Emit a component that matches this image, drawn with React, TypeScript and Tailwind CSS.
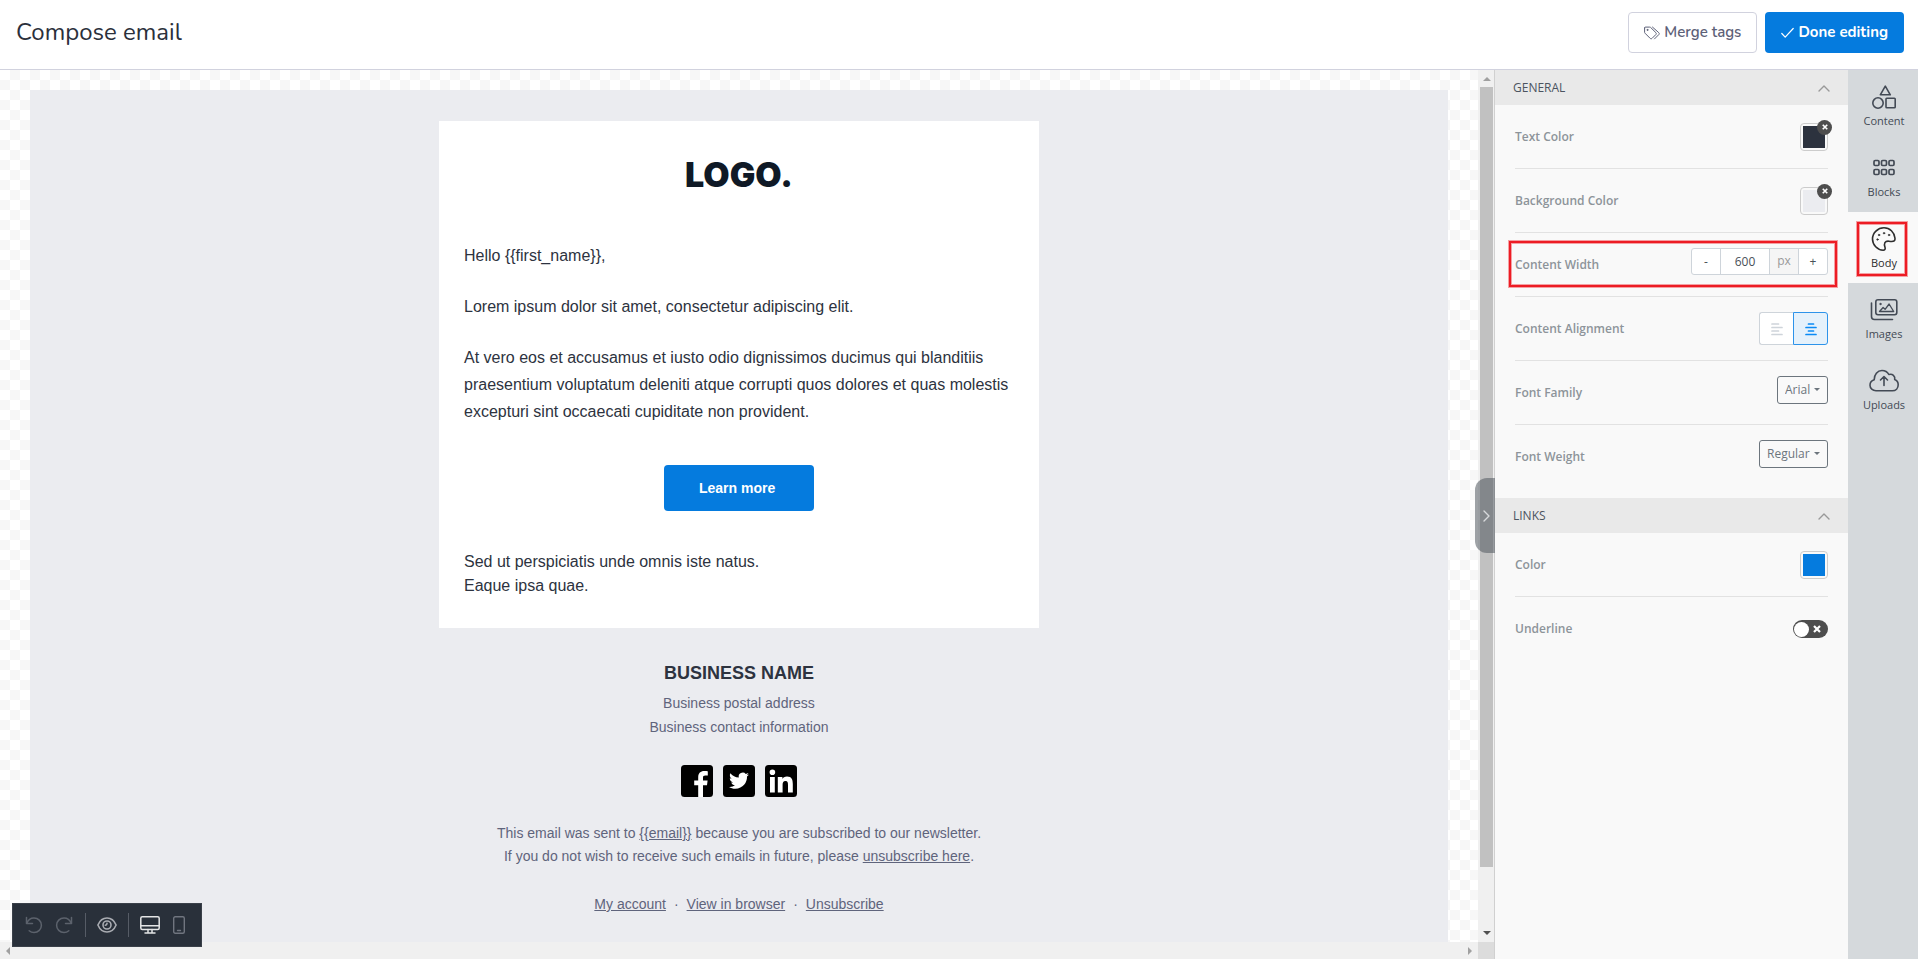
import { useState } from 'react'
import type { ReactNode } from 'react'

const TABS = [
  { label: 'Content', icon: ShapesIcon },
  { label: 'Blocks', icon: BlocksIcon },
  { label: 'Body', icon: PaletteIcon },
  { label: 'Images', icon: ImagesIcon },
  { label: 'Uploads', icon: CloudIcon },
]

const stroke = {
  fill: 'none',
  stroke: 'currentColor',
  strokeLinecap: 'round' as const,
  strokeLinejoin: 'round' as const,
}

function TagsIcon() {
  return (
    <svg width="16" height="14" viewBox="0 0 16 14" {...stroke} strokeWidth="1">
      <path d="M.6 2v4.2c0 .4.1.7.4 1l5.2 5.2c.5.5 1.3.5 1.8 0l3.9-3.9c.5-.5.5-1.3 0-1.8L6.7 1.5c-.3-.3-.6-.4-1-.4H1.500C1 1.100.6 1.500.6 2z" />
      <path d="M8.500 1.100l6.300 5.600c.6.500.6 1.300.1 1.800l-4.400 4.400" />
      <circle cx="3.400" cy="3.900" r=".5" fill="currentColor" />
    </svg>
  )
}

function CheckIcon() {
  return (
    <svg width="13" height="12" viewBox="0 0 13 12" {...stroke} strokeWidth="1.2">
      <path d="M.8 6.500l3.400 3.700L12.200 1.500" />
    </svg>
  )
}

function ShapesIcon() {
  return (
    <svg width="28" height="24" viewBox="0 0 28 24" {...stroke} strokeWidth="1.6">
      <path d="M15.300 1.200l5 8.600H10.300z" />
      <circle cx="8" cy="18" r="5.200" />
      <rect x="16" y="13.200" width="9.200" height="9.600" rx=".8" />
    </svg>
  )
}

function BlocksIcon() {
  return (
    <svg width="28" height="24" viewBox="0 0 28 24" {...stroke} strokeWidth="1.7">
      {[4, 11.5, 19].map((x) => (
        <g key={x}>
          <rect x={x} y="4.500" width="5" height="5" rx="1.200" />
          <rect x={x} y="13.500" width="5" height="5" rx="1.200" />
        </g>
      ))}
    </svg>
  )
}

function PaletteIcon() {
  return (
    <svg width="28" height="24" viewBox="0 0 28 24" {...stroke} strokeWidth="1.6">
      <path d="M14 .8C7.800.8 2.500 5.800 2.500 12c0 6 4.900 10.900 10.700 11.200 1.500 0 2.300-1.200 1.900-2.500-.7-1.800-1-3.600-.2-5 .8-1.300 2.200-1.700 4-1.500 2.100.3 4.300.5 5.300-.4.700-.6.9-1.500.8-2.600C24.400 5.300 19.800.8 14 .8z" />
      <g fill="currentColor" strokeWidth=".6">
        <circle cx="7.500" cy="12.500" r=".8" />
        <circle cx="9" cy="8" r=".8" />
        <circle cx="14" cy="6.200" r=".8" />
        <circle cx="19" cy="8" r=".8" />
      </g>
    </svg>
  )
}

function ImagesIcon() {
  return (
    <svg width="28" height="24" viewBox="0 0 28 24" {...stroke} strokeWidth="1.6">
      <rect x="5.800" y="1.800" width="21" height="15" rx="2.200" />
      <path d="M1.500 5v13.500c0 1.700 1.200 3 3 3h18" />
      <path d="M9.500 13.500l3.600-4 2 1.800 4-5.300 4.600 7.500z" strokeWidth="1.300" />
      <circle cx="10.500" cy="6" r=".9" fill="currentColor" strokeWidth=".4" />
    </svg>
  )
}

function CloudIcon() {
  return (
    <svg width="30" height="24" viewBox="0 0 30 24" {...stroke} strokeWidth="1.6">
      <path d="M7 21.800c-3.300 0-6-2.400-6-5.600 0-2.700 1.800-4.800 4.200-5.500C5.100 5.600 8.500 1.500 13 1.500c3.200 0 5.500 1.500 6.800 4 3.600-1.100 6.700 1.500 5.900 5.100 2.200.9 3.500 2.800 3.500 5.200 0 3.400-2.400 6-5.900 6z" />
      <path d="M15 16.500v-9M11.500 11L15 7.500l3.500 3.500" />
    </svg>
  )
}

function UndoIcon({ flip = false }: { flip?: boolean }) {
  return (
    <svg width="18" height="18" viewBox="0 0 18 18" className={flip ? '-scale-x-100' : ''} {...stroke} strokeWidth="1.500">
      <path d="M1.500 1.500v6h6" />
      <path d="M1.800 7.200C3 4 5.700 2 9 2c4.200 0 7.400 3.200 7.400 7.200S13.200 16.500 9 16.500c-1.900 0-3.500-.6-4.800-1.700" />
    </svg>
  )
}

function EyeIcon() {
  return (
    <svg width="20" height="18" viewBox="0 0 20 18" {...stroke} strokeWidth="1.600">
      <path d="M.9 9C2.700 4.700 6 2 10 2s7.300 2.700 9.100 7c-1.800 4.300-5.100 7-9.100 7S2.700 13.300.9 9z" />
      <circle cx="10" cy="9" r="4" />
      <path d="M8.300 9.200A1.800 1.800 0 0 0 10 7.200" />
    </svg>
  )
}

function DesktopIcon() {
  return (
    <svg width="20" height="18" viewBox="0 0 20 18" {...stroke} strokeWidth="1.500">
      <rect x=".8" y=".8" width="18.400" height="12.600" rx="1.500" />
      <path d="M1 9.800h18M8 13.500v3M12 13.500v3M5 17h10" />
    </svg>
  )
}

function PhoneIcon() {
  return (
    <svg width="12" height="18" viewBox="0 0 12 18" {...stroke} strokeWidth="1.400">
      <rect x=".7" y=".7" width="10.600" height="16.600" rx="1.500" />
      <path d="M4.500 14.500h3" />
    </svg>
  )
}

function ChevronIcon({ className = '' }: { className?: string }) {
  return (
    <svg width="12" height="12" viewBox="0 0 12 12" className={className} {...stroke} strokeWidth="1.400">
      <path d="M1 9l5-5 5 5" />
    </svg>
  )
}

function CrossIcon({ size }: { size: number }) {
  return (
    <svg width={size} height={size} viewBox="0 0 8 8" {...stroke} strokeLinecap="butt" strokeWidth="2.200">
      <path d="M1 1l6 6M7 1L1 7" />
    </svg>
  )
}

function Header() {
  return (
    <header className="flex h-[70px] shrink-0 items-start justify-between border-b border-[#d1d2de] bg-white pt-3 pr-3.5 pl-4 font-['Nunito','Lato',sans-serif]">
      <h1 className="text-2xl leading-10 font-normal text-[#2b303b]">Compose email</h1>
      <div className="flex gap-2">
        <button className="flex h-[41px] items-center gap-1 rounded-sm border border-[#d1d2de] px-[15px] text-[15px] font-semibold text-[#5d6178]">
          <TagsIcon />
          Merge tags
        </button>
        <button className="flex h-[41px] items-center gap-1 rounded-sm bg-[#057bde] px-4 text-[15px] font-bold text-white">
          <CheckIcon />
          Done editing
        </button>
      </div>
    </header>
  )
}

function SocialLink({ label, children }: { label: string; children: ReactNode }) {
  return (
    <a href="#" aria-label={label}>
      <svg width="32" height="32" viewBox="0 0 32 32">
        <rect width="32" height="32" rx="3.500" fill="#000" />
        {children}
      </svg>
    </a>
  )
}

function EmailPreview() {
  return (
    <div className="flex flex-1 flex-col items-center bg-[#ebecf0] pt-[31px] font-['Liberation_Sans',Arial,sans-serif] text-[#2d3340]">
      <div className="w-full max-w-[600px] bg-white px-[25px] pb-[30px]">
        <div className="flex h-[121px] items-center justify-center pb-[15px] font-['Inter',sans-serif] text-[34px] font-black text-[#0f1926]">
          LOGO.
        </div>
        <div className="space-y-6 leading-[27px]">
          <p>Hello {'{{first_name}}'},</p>
          <p>Lorem ipsum dolor sit amet, consectetur adipiscing elit.</p>
          <p>
            At vero eos et accusamus et iusto odio dignissimos ducimus qui blanditiis praesentium voluptatum deleniti
            atque corrupti quos dolores et quas molestis excepturi sint occaecati cupiditate non provident.
          </p>
        </div>
        <div className="flex justify-center pt-10 pb-[39px]">
          <a
            href="#"
            className="h-[46px] rounded-sm bg-[#057bde] px-[35px] text-sm leading-[46px] font-bold text-white"
          >
            Learn more&nbsp;
          </a>
        </div>
        <p>
          Sed ut perspiciatis unde omnis iste natus.
          <br />
          Eaque ipsa quae.
        </p>
      </div>

      {/* Footer */}
      <div className="flex flex-col items-center pt-[31px] text-center text-sm leading-[23px] text-[#5f647c]">
        <h2 className="text-lg leading-7 font-bold text-[#2d3340]">BUSINESS NAME</h2>
        <p className="pt-1 leading-6">
          Business postal address
          <br />
          Business contact information
        </p>
        <div className="flex gap-2.5 pt-[26px] pb-[25px]">
          <SocialLink label="Facebook">
            <path fill="#fff" d="M17.200 32V20.200h-4V15.600h4v-3.400c0-4 2.400-6.200 6-6.200 1.700 0 3.200.1 3.600.2v4.200h-2.500c-1.900 0-2.300.9-2.300 2.300v2.900h4.600l-.6 4.600h-4V32z" />
          </SocialLink>
          <SocialLink label="Twitter">
            <path fill="#fff" d="M26 9.500c-.7.300-1.500.6-2.400.7.900-.5 1.500-1.300 1.800-2.300-.8.500-1.700.8-2.600 1A4.100 4.100 0 0 0 15.800 12.600c-3.400-.2-6.400-1.800-8.400-4.300-1.100 1.900-.5 4.300 1.300 5.500-.7 0-1.300-.2-1.900-.5 0 2 1.400 3.700 3.300 4.100-.6.200-1.200.2-1.900.1.500 1.600 2 2.800 3.800 2.800A8.300 8.300 0 0 1 6 22c1.800 1.200 4 1.800 6.300 1.800 7.600 0 12-6.400 11.700-12.200.8-.6 1.500-1.300 2-2.100z" />
          </SocialLink>
          <SocialLink label="LinkedIn">
            <path fill="#fff" d="M5 12h4.800v15.500H5zM7.400 4.400a2.800 2.800 0 1 1 0 5.600 2.800 2.800 0 0 1 0-5.600zM12.800 12h4.600v2.100c.6-1.200 2.200-2.500 4.600-2.500 4.900 0 5.800 3.200 5.800 7.400v8.500H23V20c0-1.800 0-4.100-2.500-4.100s-2.900 2-2.900 4v7.600h-4.800z" />
          </SocialLink>
        </div>
        <p>
          This email was sent to <a href="#" className="underline">{'{{email}}'}</a> because you are subscribed to our
          newsletter.
          <br />
          If you do not wish to receive such emails in future, please{' '}
          <a href="#" className="underline">unsubscribe here</a>.
        </p>
        <p className="flex gap-2 pt-[25px] pb-[26px]">
          <a href="#" className="underline">My account</a>·
          <a href="#" className="underline">View in browser</a>·
          <a href="#" className="underline">Unsubscribe</a>
        </p>
      </div>
    </div>
  )
}

function Toolbar() {
  return (
    <div className="absolute bottom-3 left-3 flex h-11 w-[190px] items-center border border-[#3a4049] bg-[#29303a] pl-3 text-[#5c626c]">
      <button aria-label="Undo"><UndoIcon /></button>
      <button aria-label="Redo" className="ml-3"><UndoIcon flip /></button>
      <span className="mr-[11px] ml-3 h-6 w-px bg-[#565c66]" />
      <button aria-label="Preview" className="text-[#a9acb2]"><EyeIcon /></button>
      <span className="mx-[11px] h-6 w-px bg-[#565c66]" />
      <button aria-label="Desktop" className="text-[#e4e5e6]"><DesktopIcon /></button>
      <button aria-label="Mobile" className="ml-[13px] text-[#70757f]"><PhoneIcon /></button>
    </div>
  )
}

function Canvas() {
  return (
    <main className="relative grid min-w-0 flex-1 grid-cols-[1fr_16px] grid-rows-[1fr_17px] border-r border-[#d0d0d0]">
      <div className="flex bg-[repeating-conic-gradient(#f7f7f7_0_25%,#fff_0_50%)] bg-[size:20px_20px] px-[30px] pt-5">
        <EmailPreview />
      </div>

      {/* Scrollbars */}
      <div className="flex flex-col items-center bg-[#f0f0f0] pl-0.5">
        <span className="mt-[7px] border-x-4 border-b-4 border-x-transparent border-b-[#a0a0a0]" />
        <span className="mt-1.5 mr-px w-[13px] flex-1 self-stretch bg-[#c1c1c1]" />
        <span className="mt-16 mb-[7px] border-x-4 border-t-4 border-x-transparent border-t-[#505050]" />
      </div>
      <div className="flex items-center justify-between bg-[#f0f0f0] px-1.5">
        <span className="border-y-4 border-r-4 border-y-transparent border-r-[#a0a0a0]" />
        <span className="border-y-4 border-l-4 border-y-transparent border-l-[#a0a0a0]" />
      </div>
      <div className="bg-[#dcdcdc]" />

      <Toolbar />
      <button
        aria-label="Collapse panel"
        className="absolute top-[408px] -right-px flex h-[75px] w-5 items-center justify-center rounded-l-xl bg-[#51575e]/55 text-[#d8dadc]"
      >
        <ChevronIcon className="ml-1 rotate-90" />
      </button>
    </main>
  )
}

function Section({ title, children }: { title: string; children: ReactNode }) {
  return (
    <section className="mb-[9px]">
      <button className="flex h-[35px] w-full items-center justify-between bg-[#e9e9e9] px-[18px] text-xs text-[#4c5460]">
        {title}
        <ChevronIcon className="text-[#999]" />
      </button>
      <div className="px-5">{children}</div>
    </section>
  )
}

function Row({ label, htmlFor, children }: { label: string; htmlFor: string; children: ReactNode }) {
  return (
    <div className="relative flex h-16 items-center justify-between border-b border-[#e2e2e2] last:border-b-0">
      <label htmlFor={htmlFor} className="text-xs font-semibold text-[#8d949a]">{label}</label>
      {children}
    </div>
  )
}

function Swatch({ id, color, clearable = false }: { id: string; color: string; clearable?: boolean }) {
  return (
    <div className="relative size-7">
      <button id={id} className="size-7 rounded-sm border border-[#ccc] p-0.5">
        <span className={`block h-full ${color}`} />
      </button>
      {clearable && (
        <button
          aria-label="Clear color"
          className="absolute -top-[3px] -right-1 flex size-[15px] items-center justify-center rounded-full bg-[#4e4e4e] text-white"
        >
          <CrossIcon size={6} />
        </button>
      )}
    </div>
  )
}

function Dropdown({ id, value, width }: { id: string; value: string; width: string }) {
  return (
    <div className={`relative mb-1.5 ${width}`}>
      <select
        id={id}
        className="h-7 w-full appearance-none rounded-[3px] border border-[#6c757d] pl-[7px] text-xs text-[#6c757d]"
      >
        <option>{value}</option>
      </select>
      <span className="pointer-events-none absolute top-3 right-2 border-x-[3px] border-t-[3px] border-x-transparent border-t-[#6c757d]" />
    </div>
  )
}

function Highlight({ className }: { className: string }) {
  return (
    <span
      className={`pointer-events-none absolute border-2 border-[#ed1c24] shadow-[0_0_0_1px_#ed1c2466,inset_0_0_0_1px_#ed1c2466] ${className}`}
    />
  )
}

function Panel() {
  const [width, setWidth] = useState(600)
  return (
    <aside className="w-[353px] shrink-0 bg-[#f9f9f9]">
      <Section title="GENERAL">
        <Row label="Text Color" htmlFor="text-color">
          <Swatch id="text-color" color="bg-[#2c323e]" clearable />
        </Row>
        <Row label="Background Color" htmlFor="background-color">
          <Swatch id="background-color" color="bg-[#ebecf0]" clearable />
        </Row>
        <Row label="Content Width" htmlFor="content-width">
          <div className="mb-1.5 flex h-[27px] w-[137px] divide-x divide-[#ced4da] overflow-hidden rounded-[3px] border border-[#ced4da] bg-white text-xs text-[#495057]">
            <button aria-label="Decrease" className="flex-1" onClick={() => setWidth(width - 1)}>-</button>
            <input
              id="content-width"
              value={width}
              onChange={(e) => setWidth(Number(e.target.value) || 0)}
              className="w-[49px] text-center"
            />
            <span className="flex-1 bg-[#f5f5f5] text-center leading-6 text-[#999]">px</span>
            <button aria-label="Increase" className="flex-1" onClick={() => setWidth(width + 1)}>+</button>
          </div>
          <Highlight className="-right-[9px] -left-1.5 top-2 bottom-[9px]" />
        </Row>
        <Row label="Content Alignment" htmlFor="align-center">
          <div className="flex h-[33px]">
            <button aria-label="Align left" className="flex w-[34px] items-center justify-center rounded-l-[3px] border border-r-0 border-[#ced4da] bg-white text-[#ced4da]">
              <svg width="12" height="14" viewBox="0 0 12 14" {...stroke} strokeWidth="1.700">
                <path d="M1 2h6.500M1 5.500h10M1 9h6.500M1 12.500h10" />
              </svg>
            </button>
            <button id="align-center" aria-label="Align center" className="flex w-[35px] items-center justify-center rounded-r-[3px] border border-[#2d93ea] bg-[#e5f1fb] text-[#0a8af5]">
              <svg width="12" height="14" viewBox="0 0 12 14" {...stroke} strokeWidth="1.700">
                <path d="M3.500 2h5M1 5.500h10M3.500 9h5M1 12.500h10" />
              </svg>
            </button>
          </div>
        </Row>
        <Row label="Font Family" htmlFor="font-family">
          <Dropdown id="font-family" value="Arial" width="w-[51px]" />
        </Row>
        <Row label="Font Weight" htmlFor="font-weight">
          <Dropdown id="font-weight" value="Regular" width="w-[69px]" />
        </Row>
      </Section>

      <Section title="LINKS">
        <Row label="Color" htmlFor="link-color">
          <Swatch id="link-color" color="bg-[#057bde]" />
        </Row>
        <Row label="Underline" htmlFor="underline">
          <span className="relative flex h-[18px] w-[35px] items-center rounded-full bg-[#4e4e4e] p-px">
            <input id="underline" type="checkbox" className="absolute inset-0 cursor-pointer appearance-none" />
            <span className="size-[15px] rounded-full bg-white" />
            <span className="ml-1 text-white"><CrossIcon size={8} /></span>
          </span>
        </Row>
      </Section>
    </aside>
  )
}

function Tabs() {
  return (
    <nav className="w-[70px] shrink-0 bg-[#d5d9dc]">
      {TABS.map(({ label, icon: Icon }) => {
        const active = label === 'Body'
        return (
          <button
            key={label}
            className={`relative flex h-[71px] w-full flex-col items-center gap-1 pt-[15px] pl-0.5 text-[11px] leading-4 ${
              active ? 'bg-[#f9f9f9] text-[#2d2d2d]' : 'text-[#434a55]'
            }`}
          >
            <Icon />
            {label}
            {active && <Highlight className="top-2.5 right-[11px] bottom-[7px] left-[9px]" />}
          </button>
        )
      })}
    </nav>
  )
}

export default function App() {
  return (
    <div className="flex min-h-screen flex-col font-['Open_Sans',sans-serif]">
      <Header />
      <div className="flex flex-1">
        <Canvas />
        <Panel />
        <Tabs />
      </div>
    </div>
  )
}
